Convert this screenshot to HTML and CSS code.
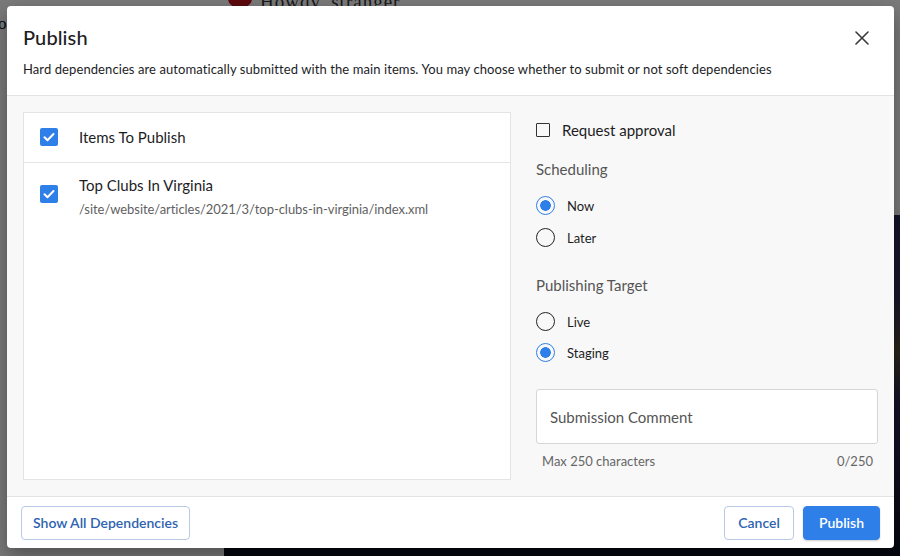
FILE: index.html
```html
<!DOCTYPE html>
<html>
<head>
<meta charset="utf-8">
<link rel="stylesheet" href="styles.css">
</head>
<body>
<div class="page">
  <div class="page-top">
    <span class="edge-letter">o</span>
    <span class="avatar"></span>
    <span class="howdy">Howdy, stranger</span>
  </div>
  <div class="hero"></div>
</div>
<div class="backdrop"></div>
<div class="dialog" role="dialog">
  <header class="dlg-header">
    <div class="title-row">
      <h1 class="title">Publish</h1>
      <button class="close" aria-label="Close">
        <svg width="14" height="14" viewBox="0 0 14 14"><path d="M1 1L13 13M13 1L1 13" stroke="#3a3a3a" stroke-width="1.6" stroke-linecap="round"/></svg>
      </button>
    </div>
    <p class="subtitle">Hard dependencies are automatically submitted with the main items. You may choose whether to submit or not soft dependencies</p>
  </header>
  <section class="dlg-body">
    <div class="items">
      <div class="item-row head-row">
        <span class="cbx checked"><svg viewBox="0 0 18 18" width="18" height="18"><path d="M4.5 9.2l3 3 6-6.2" fill="none" stroke="#fff" stroke-width="2" stroke-linecap="round" stroke-linejoin="round"/></svg></span>
        <span class="head-label">Items To Publish</span>
      </div>
      <div class="item-row entry-row">
        <span class="cbx checked"><svg viewBox="0 0 18 18" width="18" height="18"><path d="M4.5 9.2l3 3 6-6.2" fill="none" stroke="#fff" stroke-width="2" stroke-linecap="round" stroke-linejoin="round"/></svg></span>
        <div class="entry-text">
          <div class="entry-title">Top Clubs In Virginia</div>
          <div class="entry-path">/site/website/articles/2021/3/top-clubs-in-virginia/index.xml</div>
        </div>
      </div>
    </div>
    <div class="options">
      <label class="approval"><span class="cbx empty"></span><span>Request approval</span></label>
      <div class="group-label">Scheduling</div>
      <div class="radio-group">
        <label class="radio"><span class="rdo on"></span>Now</label>
        <label class="radio"><span class="rdo"></span>Later</label>
      </div>
      <div class="group-label second">Publishing Target</div>
      <div class="radio-group second">
        <label class="radio"><span class="rdo"></span>Live</label>
        <label class="radio"><span class="rdo on"></span>Staging</label>
      </div>
      <div class="comment-box">Submission Comment</div>
      <div class="helper"><span>Max 250 characters</span><span>0/250</span></div>
    </div>
  </section>
  <footer class="dlg-footer">
    <button class="btn outline wide">Show All Dependencies</button>
    <div class="actions">
      <button class="btn outline cancel">Cancel</button>
      <button class="btn primary">Publish</button>
    </div>
  </footer>
</div>
</body>
</html>
```
FILE: styles.css
```css
* { box-sizing: border-box; }
html, body { margin: 0; padding: 0; }
body {
  width: 900px;
  height: 556px;
  overflow: hidden;
  background: #ffffff;
  font-family: "Lato", "Noto Sans", sans-serif;
  position: relative;
}
.page { width: 900px; height: 556px; display: flex; flex-direction: column; }
.page-top { height: 215px; position: relative; font-family: "Liberation Serif", serif; }
.edge-letter { position: absolute; left: -2px; top: 14px; font-size: 17px; color: #111; }
.avatar { position: absolute; left: 228px; top: -10px; width: 24px; height: 18px; border-radius: 50%; background: #c2141b; }
.howdy { position: absolute; left: 260px; top: -9px; font-size: 19px; color: #333; letter-spacing: 1px; }
.hero {
  flex: 1;
  margin-left: 224px;
  background: linear-gradient(180deg, #2a2a58 0%, #3a3058 25%, #544a38 40%, #2c2454 55%, #1a1a3a 80%, #0c1020 100%);
}
.backdrop { position: absolute; inset: 0; background: rgba(0,0,0,0.52); }
.dialog {
  position: absolute;
  left: 7px; top: 6px;
  width: 887px; height: 542px;
  background: #fff;
  border-radius: 4px;
  box-shadow: 0 8px 20px rgba(0,0,0,0.35);
  display: flex;
  flex-direction: column;
  overflow: hidden;
  color: #1d1d1f;
}
.dlg-header { padding: 17px 16px 0 16px; height: 90px; border-bottom: 1px solid #e3e3e3; }
.title-row { display: flex; justify-content: space-between; align-items: center; height: 28px; }
.title { margin: 0; font-size: 20px; font-weight: 500; letter-spacing: 0.1px; }
.close { border: 0; background: none; padding: 0; margin-right: 9px; margin-top: 2px; width: 14px; height: 14px; display: flex; }
.subtitle { margin: 9px 0 0 0; font-size: 13px; line-height: 18px; color: #1d1d1f; letter-spacing: 0.09px; }
.dlg-body {
  flex: 1;
  background: #f8f8f8;
  display: grid;
  grid-template-columns: 488px 1fr;
  gap: 25px;
  padding: 16px 16px 16px 16px;
  border-bottom: 1px solid #e3e3e3;
}
.items { background: #fff; border: 1px solid #e4e4e4; }
.item-row { display: flex; align-items: flex-start; padding: 0 16px; }
.head-row { height: 50px; align-items: center; border-bottom: 1px solid #e4e4e4; padding-bottom: 2px; }
.entry-row { padding-top: 13px; }
.entry-row .cbx { margin-top: 9px; }
.cbx {
  width: 18px; height: 18px; border-radius: 2px; flex: none;
  display: inline-flex;
}
.cbx.checked { background: #2f7fe8; }
.head-label { margin-left: 21px; font-size: 15px; }
.entry-text { margin-left: 21px; }
.entry-title { font-size: 15px; line-height: 19px; }
.entry-path { font-size: 13px; line-height: 18px; color: #5f5f5f; margin-top: 5px; letter-spacing: -0.05px; }
.options { display: flex; flex-direction: column; padding-top: 9px; }
.approval { display: flex; align-items: center; gap: 12px; font-size: 15px; height: 18px; }
.cbx.empty { width: 14px; height: 14px; border: 1.5px solid #333; border-radius: 1px; }
.group-label { font-size: 15px; color: #555; margin-top: 21px; line-height: 18px; }
.group-label.second { margin-top: 29px; }
.radio-group { display: flex; flex-direction: column; gap: 13px; margin-top: 18px; }
.radio-group.second { margin-top: 18px; gap: 12px; }
.radio { display: flex; align-items: center; gap: 12px; font-size: 13px; height: 19px; }
.rdo { width: 19px; height: 19px; border-radius: 50%; border: 1.6px solid #222; flex: none; }
.rdo.on { border-color: #2f7fe8; background: radial-gradient(circle, #2f7fe8 0 5px, transparent 5.6px); }
.comment-box {
  margin-top: 27px;
  height: 55px;
  background: #fff;
  border: 1px solid #d6d6d6;
  border-radius: 3px;
  padding: 0 13px;
  display: flex; align-items: center;
  font-size: 15px; color: #555;
}
.helper { display: flex; justify-content: space-between; font-size: 13px; color: #666; padding: 0 5px 0 6px; margin-top: 9px; }
.dlg-footer { height: 51px; display: flex; justify-content: space-between; align-items: center; padding: 0 14px 0 14px; }
.actions { display: flex; gap: 9px; }
.btn {
  height: 34px; border-radius: 4px; font-family: inherit; font-size: 14px; font-weight: 600;
  padding: 0 15px; cursor: pointer;
}
.btn.wide { padding: 0 11px; }
.btn.cancel { padding: 0 13px; }
.btn.outline { background: #fff; border: 1px solid #b9c9e6; color: #2d63b0; }
.btn.primary { background: #2f7fe8; border: 1px solid #2f7fe8; color: #fff; box-shadow: 0 1px 2px rgba(0,0,0,0.2); }
```
